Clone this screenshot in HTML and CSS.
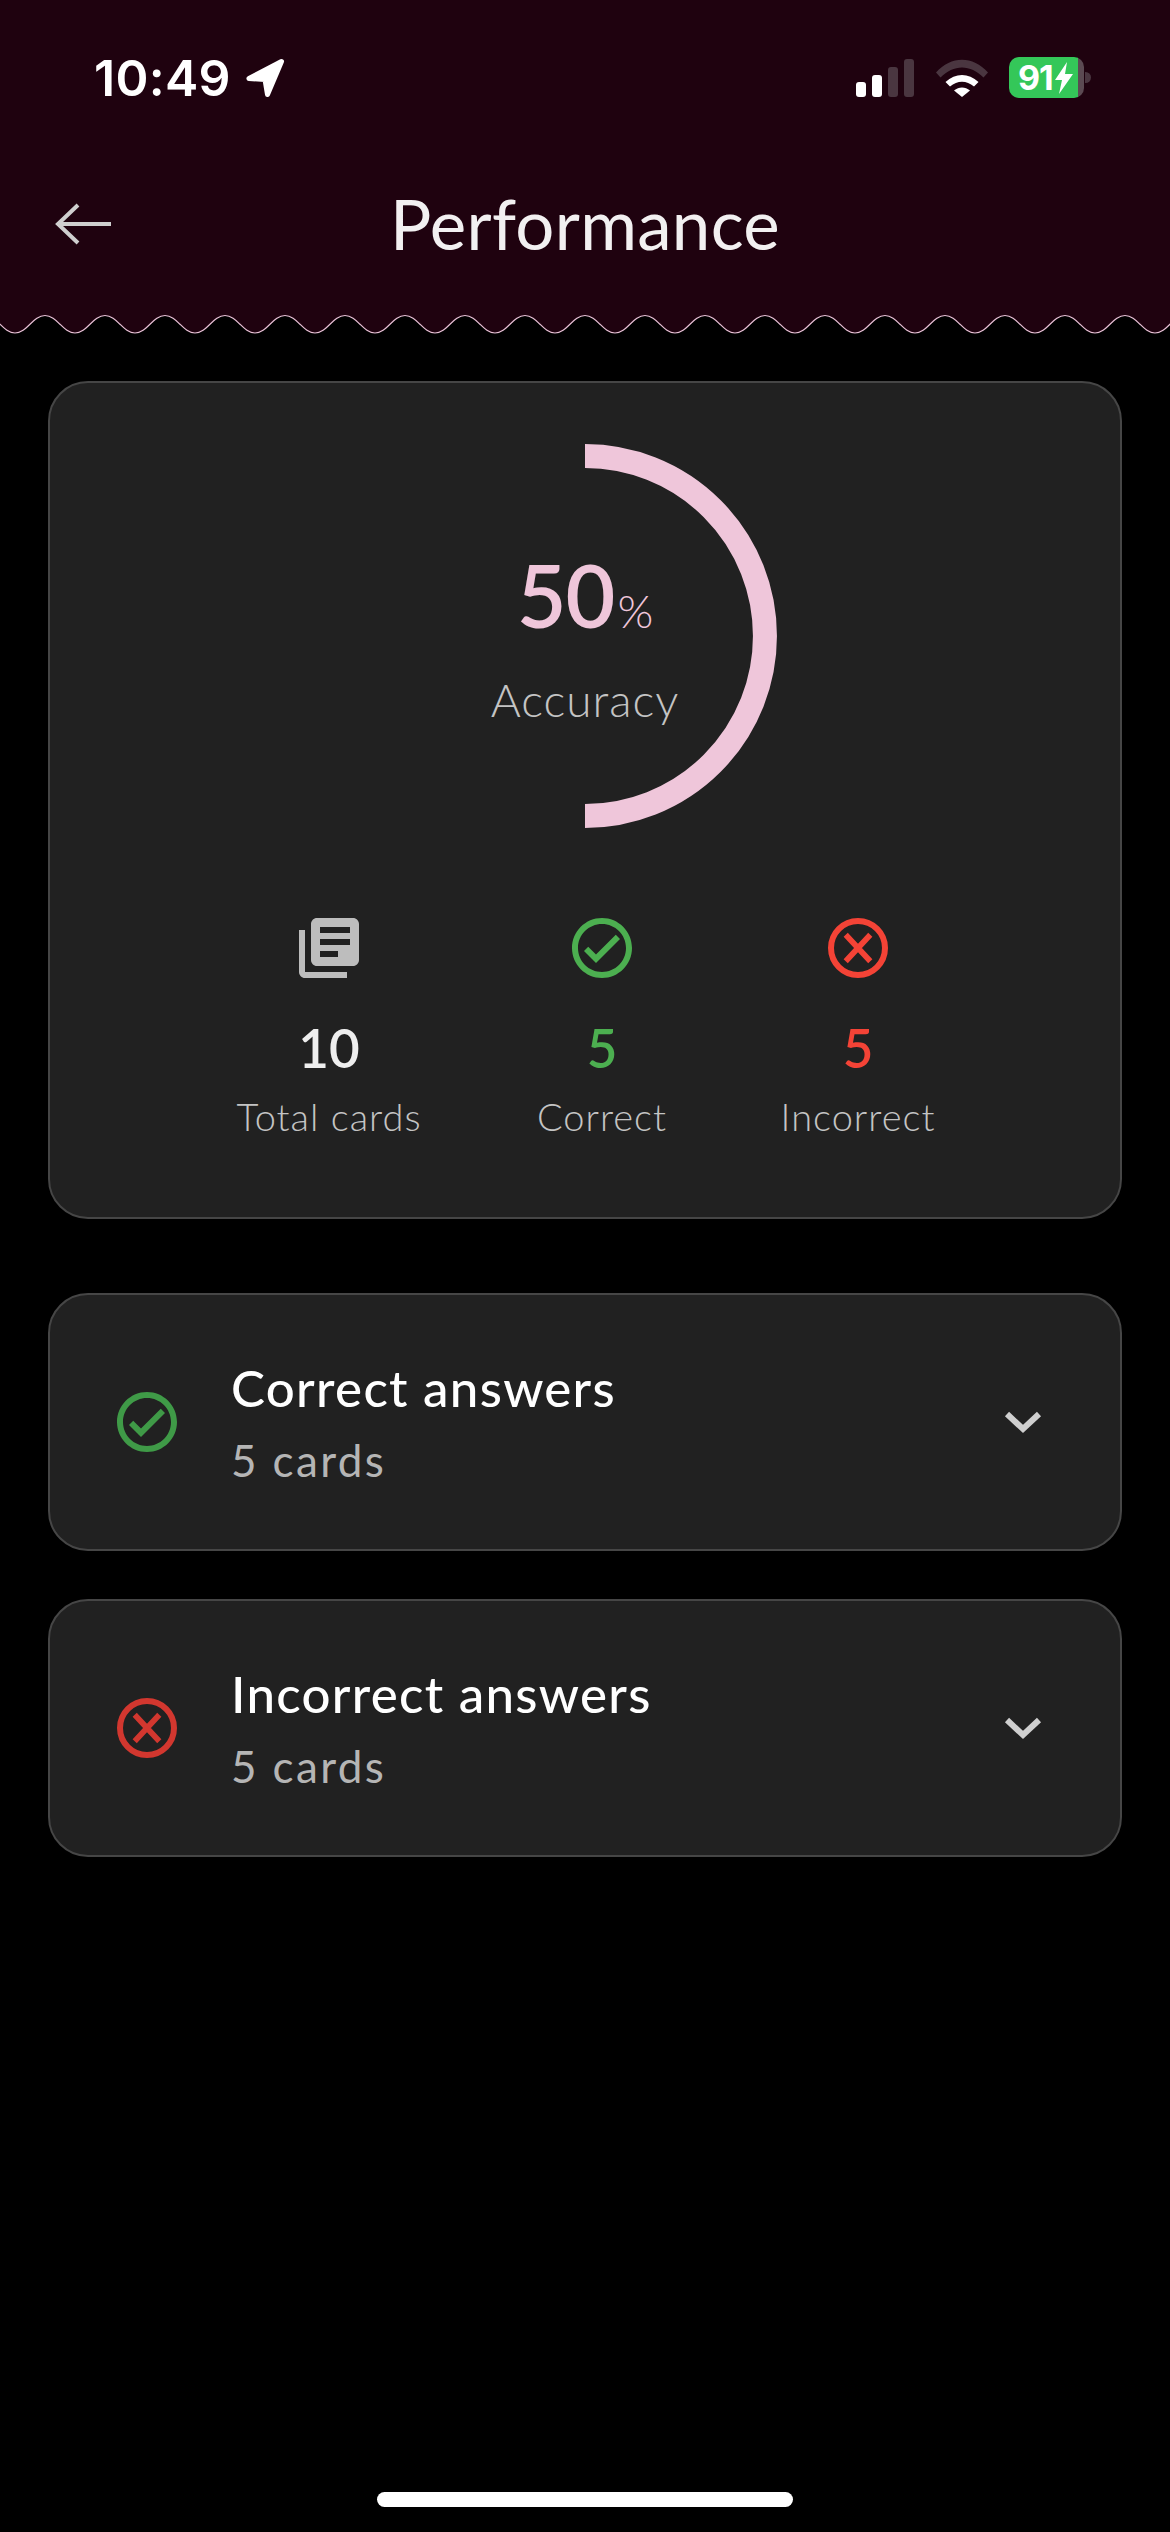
FILE: index.html
```html
<!DOCTYPE html>
<html lang="en">
<head>
<meta charset="utf-8">
<title>Performance</title>
<link rel="stylesheet" href="styles.css">
</head>
<body>
<div class="page">
  <header class="header">
    <div class="status">
      <div class="status-left">
        <span class="time">10:49</span>
        <svg class="loc" width="40" height="40" viewBox="0 0 40 40"><path d="M36.500 3.500 4 20.500 20 21.500 22.500 36.500Z" fill="#fff" stroke="#fff" stroke-width="5" stroke-linejoin="round"/></svg>
      </div>
      <div class="status-right">
        <svg class="signal" width="58" height="38" viewBox="0 0 58 38"><rect x="0" y="23" width="10" height="15" rx="3" fill="#fff"/><rect x="16" y="16" width="10" height="22" rx="3" fill="#fff"/><rect x="32" y="8" width="10" height="30" rx="3" fill="#4a3640"/><rect x="48" y="0" width="10" height="38" rx="3" fill="#4a3640"/></svg>
        <svg class="wifi" width="52" height="38" viewBox="0 0 52 38"><path d="M0 13.500C15 -3.500 37 -3.500 52 13.500L47.500 18.500C34.500 5 17.500 5 4.500 18.500Z" fill="#4a3640"/><path d="M9.500 23C19.500 13.500 32.500 13.500 42.500 23L38 27.500C30.500 21 21.500 21 14 27.500Z" fill="#fff"/><path d="M18 31.500C23 27.500 29 27.500 34 31.500L26 38Z" fill="#fff"/></svg>
        <div class="battery">
          <span class="battery-body"><span class="battery-num">91</span><svg class="bolt" width="20" height="32" viewBox="0 0 20 32"><path d="M13 0 1 18H8L5 32 19 12H11Z" fill="#fff"/></svg></span>
          <span class="battery-nub"></span>
        </div>
      </div>
    </div>
    <div class="titlebar">
      <svg class="back" width="60" height="44" viewBox="0 0 60 44"><path d="M25 3 5 22 25 41M5 22H58" fill="none" stroke="#cfcfcf" stroke-width="4"/></svg>
      <h1 class="title">Performance</h1>
    </div>
  </header>
  <svg class="wave" width="1170" height="20" viewBox="0 0 1170 20">
    <defs>
      <pattern id="scallop" width="60" height="20" patternUnits="userSpaceOnUse">
        <path d="M-15 1.500C-3 1.500 3 19 15 19S33 1.500 45 1.500 63 19 75 19V0H-15Z" fill="#1f020f"/>
        <path d="M-15 1.500C-3 1.500 3 19 15 19S33 1.500 45 1.500 63 19 75 19" fill="none" stroke="#e7c0d5" stroke-width="1.200"/>
      </pattern>
    </defs>
    <rect width="1170" height="20" fill="url(#scallop)"/>
  </svg>

  <main class="main">
    <section class="card summary">
      <div class="ring">
        <svg width="384" height="384" viewBox="0 0 384 384"><path d="M192 12A180 180 0 0 1 192 372" fill="none" stroke="#efc6da" stroke-width="24"/></svg>
        <div class="ring-text">
          <div class="score"><span class="score-num">50</span><span class="score-pct">%</span></div>
          <div class="score-label">Accuracy</div>
        </div>
      </div>
      <div class="stats">
        <div class="stat stat-total">
          <svg class="stat-icon" width="72" height="72" viewBox="0 0 24 24"><path fill="#bdbdbd" d="M4 6H2v14c0 1.100.9 2 2 2h14v-2H4V6zm16-4H8c-1.100 0-2 .9-2 2v12c0 1.100.9 2 2 2h12c1.100 0 2-.9 2-2V4c0-1.100-.9-2-2-2zm-1 9H9V9h10v2zm-4 4H9v-2h6v2zm4-8H9V5h10v2z"/></svg>
          <div class="stat-num num-white">10</div>
          <div class="stat-label">Total cards</div>
        </div>
        <div class="stat stat-correct">
          <svg class="stat-icon" width="72" height="72" viewBox="0 0 24 24"><path fill="#4caf50" d="M12 2C6.480 2 2 6.480 2 12s4.480 10 10 10 10-4.480 10-10S17.520 2 12 2zm0 18c-4.410 0-8-3.590-8-8s3.590-8 8-8 8 3.590 8 8-3.590 8-8 8zm4.590-12.420L10 14.170l-2.590-2.580L6 13l4 4 8-8z"/></svg>
          <div class="stat-num num-green">5</div>
          <div class="stat-label">Correct</div>
        </div>
        <div class="stat stat-incorrect">
          <svg class="stat-icon" width="72" height="72" viewBox="0 0 24 24"><circle cx="12" cy="12" r="9" fill="none" stroke="#f44336" stroke-width="2"/><path d="M7.900 7.600 16.100 16.400M16.100 7.600 7.900 16.400" fill="none" stroke="#f44336" stroke-width="1.900"/></svg>
          <div class="stat-num num-red">5</div>
          <div class="stat-label">Incorrect</div>
        </div>
      </div>
    </section>

    <section class="card row">
      <svg class="row-icon" width="72" height="72" viewBox="0 0 24 24"><path fill="#3f9a47" d="M12 2C6.480 2 2 6.480 2 12s4.480 10 10 10 10-4.480 10-10S17.520 2 12 2zm0 18c-4.410 0-8-3.590-8-8s3.590-8 8-8 8 3.590 8 8-3.590 8-8 8zm4.590-12.420L10 14.170l-2.590-2.580L6 13l4 4 8-8z"/></svg>
      <div class="row-text">
        <div class="row-title">Correct answers</div>
        <div class="row-sub">5 cards</div>
      </div>
      <svg class="chevron" width="38" height="24" viewBox="0 0 38 24"><path d="M3 4 19 19 35 4" fill="none" stroke="#cfcfcf" stroke-width="6"/></svg>
    </section>

    <section class="card row">
      <svg class="row-icon" width="72" height="72" viewBox="0 0 24 24"><circle cx="12" cy="12" r="9" fill="none" stroke="#d2372f" stroke-width="2"/><path d="M7.900 7.600 16.100 16.400M16.100 7.600 7.900 16.400" fill="none" stroke="#d2372f" stroke-width="1.900"/></svg>
      <div class="row-text">
        <div class="row-title">Incorrect answers</div>
        <div class="row-sub">5 cards</div>
      </div>
      <svg class="chevron" width="38" height="24" viewBox="0 0 38 24"><path d="M3 4 19 19 35 4" fill="none" stroke="#cfcfcf" stroke-width="6"/></svg>
    </section>
  </main>
  <div class="home-indicator"></div>
</div>
</body>
</html>
```

FILE: styles.css
```css
* { box-sizing: border-box; }
html, body { margin: 0; padding: 0; background: #000; }
body { font-family: "Lato", "Noto Sans", sans-serif; color: #fff; }
.page { width: 1170px; height: 2532px; display: flex; flex-direction: column; overflow: hidden; }

.header { background: #1f020f; height: 314px; display: flex; flex-direction: column; }
.status { display: flex; justify-content: space-between; align-items: flex-start; padding: 50px 79px 0 94px; height: 176px; }
.status-left { display: flex; align-items: center; gap: 14px; height: 56px; }
.time { font-family: "Inter", sans-serif; font-size: 50px; font-weight: 600; line-height: 56px; letter-spacing: 0.3px; color: #fff; }
.status-right { display: flex; align-items: flex-start; }
.signal { margin-top: 9px; margin-left: 0; }
.wifi { margin-top: 9px; margin-left: 22px; }
.battery { display: flex; align-items: center; margin-left: 21px; margin-top: 7px; height: 41px; }
.battery-body { width: 75px; height: 41px; border-radius: 10px; background: linear-gradient(to right, #34c759 69px, #5b4a52 69px); display: flex; align-items: center; padding-left: 9px; }
.battery-num { font-family: "Inter", sans-serif; font-size: 34px; font-weight: 700; line-height: 41px; letter-spacing: -1px; color: #fff; }
.bolt { margin-left: 1px; }
.battery-nub { width: 6px; height: 11px; margin-left: 1px; border-radius: 0 6px 6px 0; background: #4a3640; }

.titlebar { position: relative; display: flex; justify-content: center; align-items: center; height: 96px; }
.back { position: absolute; left: 53px; top: 26px; }
.title { margin: 0; font-size: 69px; font-weight: 400; line-height: 96px; color: #f2f0f1; letter-spacing: 0.3px; }

.wave { display: block; flex: none; }

.main { display: flex; flex-direction: column; padding: 47px 48px 0 48px; }
.card { background: #212121; border: 2px solid #464646; border-radius: 40px; }
.summary { height: 838px; display: flex; flex-direction: column; align-items: center; padding-top: 61px; margin-bottom: 74px; }

.ring { position: relative; width: 384px; height: 384px; }
.ring svg { display: block; }
.ring-text { position: absolute; inset: 0; display: flex; flex-direction: column; align-items: center; }
.score { margin-top: 101px; line-height: 100px; color: #efc6da; white-space: nowrap; }
.score-num { font-size: 86px; font-weight: 600; letter-spacing: -1px; }
.score-pct { font-size: 46px; font-weight: 300; margin-left: 3px; }
.score-label { font-size: 46px; font-weight: 300; line-height: 56px; color: #c4c4c4; margin-top: 0; letter-spacing: 1px; }

.stats { display: flex; justify-content: center; gap: 116px; margin-top: 84px; }
.stat { display: flex; flex-direction: column; align-items: center; }
.stat-total { width: 186px; }
.stat-correct { width: 128px; }
.stat-incorrect { width: 152px; }
.stat-icon { display: block; }
.stat-num { font-size: 53px; font-weight: 600; line-height: 60px; margin-top: 34px; }
.num-white { color: #eeeeee; }
.num-green { color: #4caf50; }
.num-red { color: #f44336; }
.stat-label { font-size: 38px; font-weight: 300; line-height: 44px; margin-top: 16px; color: #c4c4c4; white-space: nowrap; letter-spacing: 1px; }

.row { height: 258px; display: flex; align-items: center; padding: 0 78px 0 61px; margin-bottom: 48px; }
.row-icon { flex: none; }
.row-text { flex: 1; margin-left: 48px; display: flex; flex-direction: column; }
.row-title { font-size: 51px; font-weight: 500; line-height: 60px; color: #fff; letter-spacing: 1.3px; }
.row-sub { font-size: 44px; font-weight: 400; line-height: 52px; margin-top: 16px; color: #b5b5b5; letter-spacing: 2.4px; }
.chevron { flex: none; }

.home-indicator { width: 416px; height: 15px; border-radius: 8px; background: #fff; margin: auto auto 25px; }
```
